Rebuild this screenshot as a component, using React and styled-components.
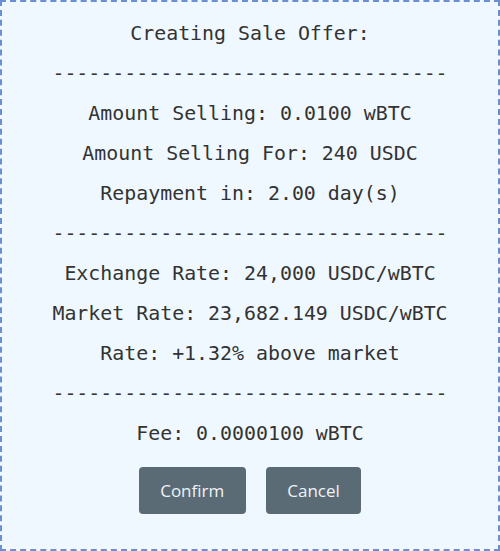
import React from "react";
import styled, { createGlobalStyle } from "styled-components";

const GlobalStyle = createGlobalStyle`
  html, body {
    margin: 0;
    padding: 0;
    background: #ffffff;
  }
  * {
    box-sizing: border-box;
  }
`;

const Modal = styled.div`
  width: 500px;
  height: 551px;
  background: #f0f8ff;
  border: 2px dashed #6b8fd4;
  padding: 12px 0 0;
  display: flex;
  flex-direction: column;
  align-items: center;
`;

const Line = styled.div`
  font-family: "DejaVu Sans Mono", monospace;
  font-size: 19.9px;
  line-height: 40px;
  color: #333333;
  text-align: center;
  white-space: pre;
`;

const Buttons = styled.div`
  display: flex;
  gap: 20px;
  margin-top: 13px;
`;

const Button = styled.button`
  height: 47px;
  padding: 0 ${(p) => p.$pad}px;
  border: none;
  border-radius: 4px;
  background: #5a6b76;
  color: #eef3f6;
  font-family: "Open Sans", sans-serif;
  font-size: 17px;
  cursor: pointer;
`;

const divider = "-".repeat(33);

const lines = [
  "Creating Sale Offer:",
  divider,
  "Amount Selling: 0.0100 wBTC",
  "Amount Selling For: 240 USDC",
  "Repayment in: 2.00 day(s)",
  divider,
  "Exchange Rate: 24,000 USDC/wBTC",
  "Market Rate: 23,682.149 USDC/wBTC",
  "Rate: +1.32% above market",
  divider,
  "Fee: 0.0000100 wBTC",
];

export default function App() {
  return (
    <>
      <GlobalStyle />
      <Modal>
        {lines.map((text, i) => (
          <Line key={i}>{text}</Line>
        ))}
        <Buttons>
          <Button $pad={21.5}>Confirm</Button>
          <Button $pad={21.5}>Cancel</Button>
        </Buttons>
      </Modal>
    </>
  );
}
